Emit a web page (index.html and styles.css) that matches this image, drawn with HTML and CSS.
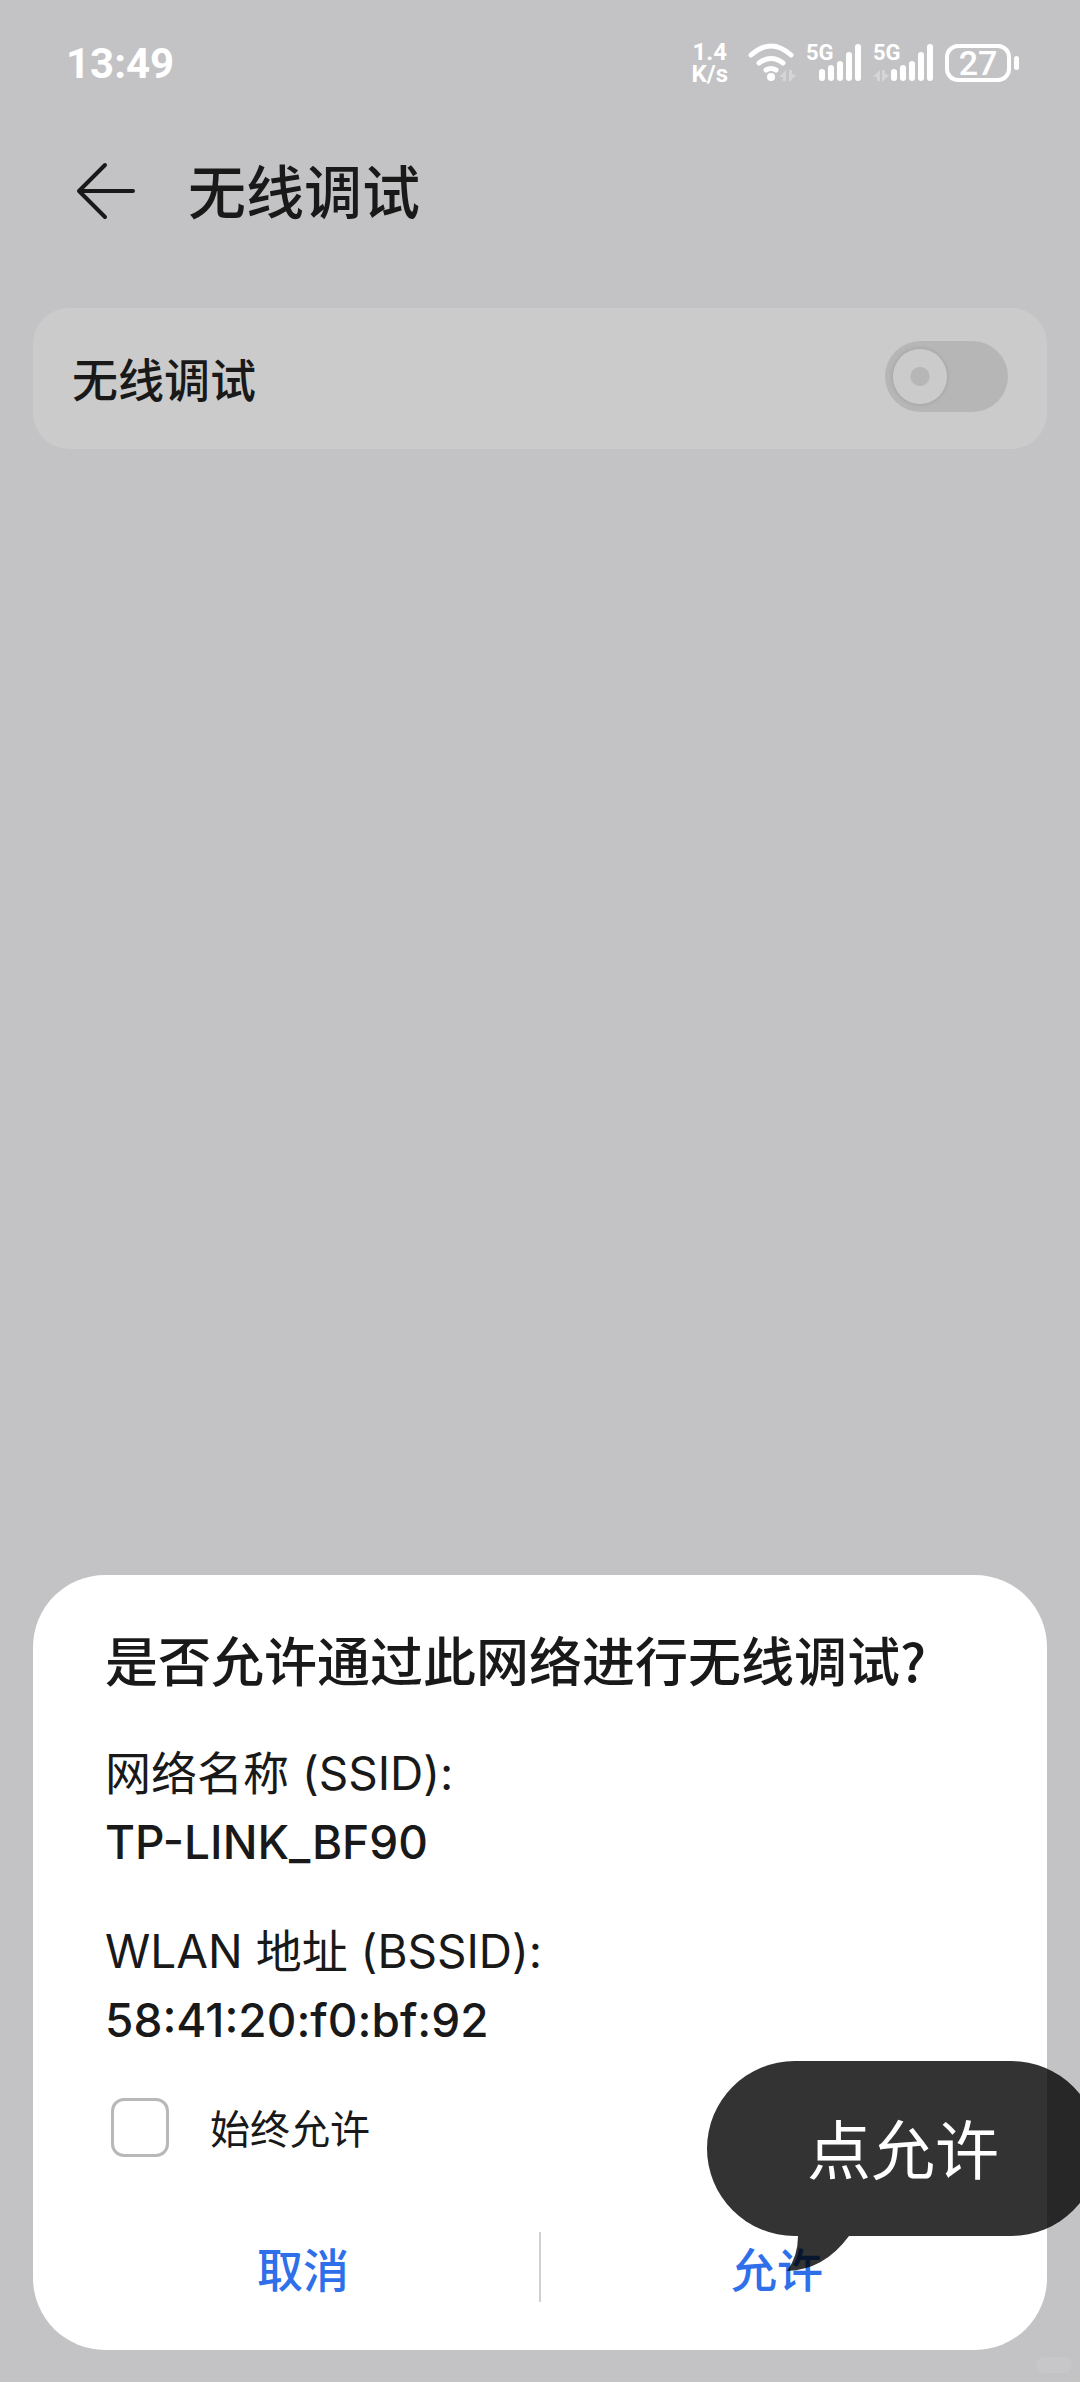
FILE: index.html
```html
<!DOCTYPE html>
<html lang="zh-CN">
<head>
  <meta charset="UTF-8">
  <meta name="viewport" content="width=device-width, initial-scale=1.0">
  <title>无线调试</title>
  <link rel="stylesheet" href="styles.css">
</head>
<body>
  <div class="status-bar">
    <span class="clock">13:49</span>
    <div class="status-icons">
      <div class="net-speed"><span>1.4</span><span>K/s</span></div>
      <svg class="wifi" width="48" height="44" viewBox="0 0 48 44" fill="none" stroke="#fff" stroke-width="5" stroke-linecap="round">
        <path d="M3 14 Q23 -4 43 14"/>
        <path d="M11 22 Q23 13 35 22"/>
        <path d="M18 29 Q23 26 28 29"/>
        <circle cx="23" cy="36" r="4" fill="#fff" stroke="none"/>
        <path class="faint" d="M31 36 L38 29 V40 H35 V36 Z M41 29 H44 V33 L48 34 L41 41 Z"/>
      </svg>
      <div class="signal">
        <span class="signal-type">5G</span>
        <svg width="55" height="44" viewBox="0 0 55 44" fill="#fff">
          <rect x="13" y="28" width="6" height="12" rx="3"/>
          <rect x="22" y="24" width="6" height="16" rx="3"/>
          <rect x="31" y="20" width="6" height="20" rx="3"/>
          <rect x="40" y="11" width="6" height="29" rx="3"/>
          <rect x="49" y="3" width="6" height="37" rx="3"/>
        </svg>
      </div>
      <div class="signal">
        <span class="signal-type">5G</span>
        <svg width="60" height="44" viewBox="0 0 60 44" fill="#fff">
          <path class="faint" d="M0 36 L7 29 V40 H4 V36 Z M9 29 H12 V33 L16 34 L9 41 Z"/>
          <rect x="18" y="28" width="6" height="12" rx="3"/>
          <rect x="27" y="24" width="6" height="16" rx="3"/>
          <rect x="36" y="20" width="6" height="20" rx="3"/>
          <rect x="45" y="11" width="6" height="29" rx="3"/>
          <rect x="54" y="3" width="6" height="37" rx="3"/>
        </svg>
      </div>
      <div class="battery"><span class="battery-level">27</span><span class="battery-tip"></span></div>
    </div>
  </div>

  <header class="title-bar">
    <button class="back" type="button" aria-label="返回">
      <svg width="60" height="60" viewBox="0 0 60 60" fill="none" stroke="#191919" stroke-width="4" stroke-linecap="round" stroke-linejoin="round">
        <path d="M29 4 L3 30 L29 56 M3 30 H57"/>
      </svg>
    </button>
    <h1>无线调试</h1>
  </header>

  <main>
    <div class="setting-row">
      <label for="wirelessDebug">无线调试</label>
      <input type="checkbox" role="switch" id="wirelessDebug" class="switch">
    </div>
  </main>

  <div class="dialog" role="dialog" aria-labelledby="dialogTitle">
    <h2 id="dialogTitle">是否允许通过此网络进行无线调试?</h2>
    <div class="info">
      <p>网络名称 (SSID):</p>
      <p class="value">TP-LINK_BF90</p>
    </div>
    <div class="info">
      <p>WLAN 地址 (BSSID):</p>
      <p class="value">58:41:20:f0:bf:92</p>
    </div>
    <div class="always">
      <input type="checkbox" id="alwaysAllow">
      <label for="alwaysAllow">始终允许</label>
    </div>
    <div class="actions">
      <button type="button">取消</button>
      <span class="divider"></span>
      <button type="button">允许</button>
    </div>
    <div class="tip">
      点允许
      <svg class="tip-tail" width="64" height="36" viewBox="0 0 64 36">
        <path d="M12 0 Q12 20 1 35 Q38 34 63 0 Z" fill="#000"/>
      </svg>
    </div>
  </div>
  <span class="badge"></span>
</body>
</html>
```

FILE: styles.css
```css
* {
  box-sizing: border-box;
}

body {
  position: relative;
  margin: 0;
  min-height: 100vh;
  display: flex;
  flex-direction: column;
  background-color: #c3c3c5;
  color: #191919;
  font-family: "Noto Sans CJK SC", sans-serif;
  overflow-x: hidden;
}

h1, h2, p {
  margin: 0;
  font-weight: 500;
}

button {
  border: none;
  background: none;
  padding: 0;
  font-family: inherit;
  cursor: pointer;
}

/* Status bar */
.status-bar {
  display: flex;
  justify-content: space-between;
  align-items: center;
  height: 126px;
  padding: 0 61px 0 66px;
  color: #fff;
  font-family: Roboto, sans-serif;
}

.clock {
  font-size: 42px;
  font-weight: 700;
}

.status-icons {
  display: flex;
  align-items: center;
}

.net-speed {
  display: flex;
  flex-direction: column;
  align-items: center;
  margin-right: 20px;
  font-size: 24px;
  line-height: 22px;
  font-weight: 700;
}

.wifi {
  margin-right: 10px;
}

.faint {
  fill: #fff;
  stroke: none;
  opacity: 0.3;
}

.signal {
  position: relative;
  display: flex;
  margin-right: 12px;
}

.signal-type {
  position: absolute;
  top: 0;
  left: 0;
  font-size: 22px;
  line-height: 24px;
  font-weight: 700;
}

.battery {
  display: flex;
  align-items: center;
  gap: 3px;
}

.battery-level {
  width: 66px;
  height: 38px;
  border: 4px solid #fff;
  border-radius: 13px;
  font-size: 34px;
  line-height: 31px;
  font-weight: 500;
  text-align: center;
}

.battery-tip {
  width: 5px;
  height: 14px;
  border-radius: 3px;
  background-color: #fff;
}

/* Title bar */
.title-bar {
  display: flex;
  align-items: center;
  gap: 52px;
  height: 130px;
  padding: 0 76px;
}

.back svg {
  display: block;
}

.title-bar h1 {
  padding-bottom: 4px;
  font-size: 58px;
  line-height: 80px;
}

/* Settings */
main {
  flex: 1;
  padding: 52px 33px;
}

.setting-row {
  display: flex;
  justify-content: space-between;
  align-items: center;
  height: 141px;
  padding: 0 39px 4px;
  border-radius: 36px;
  background-color: #cbcbcb;
  font-size: 46px;
  font-weight: 500;
}

.switch {
  appearance: none;
  width: 123px;
  height: 71px;
  margin: 0;
  padding: 8px;
  border-radius: 36px;
  background-color: #b6b6b6;
}

.switch::before {
  content: "";
  display: block;
  width: 54px;
  height: 55px;
  border-radius: 50%;
  background: radial-gradient(circle, #b6b6b6 9px, #cbcbcb 10px);
  box-shadow: 0 0 4px rgba(0, 0, 0, 0.15);
}

/* Dialog */
.dialog {
  position: relative;
  margin: 0 33px 32px;
  padding: 44px 34px 47px;
  border-radius: 72px;
  background-color: #fff;
}

.dialog h2 {
  padding: 0 38px;
  font-size: 53px;
  line-height: 80px;
}

.info {
  margin-top: 40px;
  padding: 0 38px;
  font-family: Inter, "Noto Sans CJK SC", sans-serif;
  font-size: 46px;
  line-height: 69px;
}

.info p {
  font-weight: 400;
}

.info .value {
  font-weight: 500;
}

.always {
  display: flex;
  align-items: center;
  gap: 41px;
  margin-top: 32px;
  padding: 0 44px;
  font-size: 40px;
  line-height: 80px;
}

.always input {
  appearance: none;
  width: 58px;
  height: 59px;
  margin: 0;
  border: 3px solid #b8b8b8;
  border-radius: 13px;
}

.actions {
  display: flex;
  align-items: center;
  margin-top: 64px;
}

.actions button {
  flex: 1;
  color: #2f70ea;
  font-size: 46px;
  line-height: 72px;
  font-weight: 500;
}

.divider {
  width: 2px;
  height: 70px;
  background-color: #d0d0d0;
}

/* Speech bubble over the allow button */
.tip {
  position: absolute;
  right: -52px;
  bottom: 114px;
  width: 392px;
  height: 175px;
  border-radius: 88px;
  background-color: #000;
  opacity: 0.8;
  color: #fff;
  font-size: 64px;
  line-height: 170px;
  text-align: center;
}

.tip-tail {
  position: absolute;
  top: 175px;
  left: 79px;
}

/* Faint corner mark */
.badge {
  position: absolute;
  right: 8px;
  bottom: 9px;
  width: 36px;
  height: 16px;
  border-radius: 8px;
  background-color: #c7c7c9;
}
```
